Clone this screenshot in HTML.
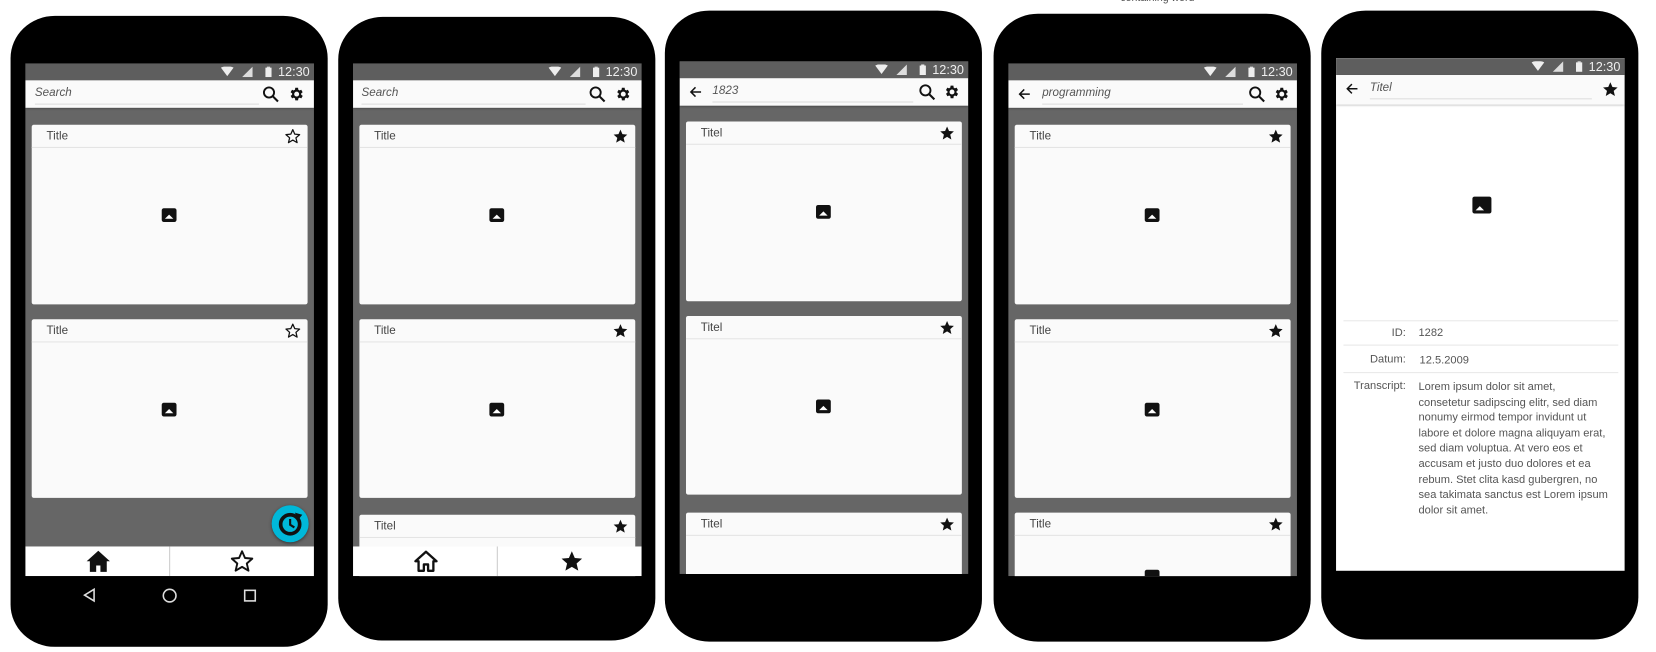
<!DOCTYPE html>
<html><head><meta charset="utf-8"><style>
*{box-sizing:border-box;margin:0;padding:0}
body{width:1656px;height:652px;background:#fff;overflow:hidden;font-family:"Liberation Sans",Arial,sans-serif}
#w{position:absolute;left:0;top:0;width:1560px;height:612px;overflow:hidden;transform:scale(1.057);transform-origin:0 0}
.ph{position:absolute;width:300px;background:#000;border-radius:42px/40px}
.sc{position:absolute;left:14px;width:273px;background:#666;overflow:hidden}
.st{position:absolute;left:0;top:0;width:100%;height:16px;background:#5e5e5e;color:#eee;font-size:12px}
.st .t{position:absolute;right:4px;top:1px}
.st svg{position:absolute;top:3px}
.ab{position:absolute;left:0;top:16px;width:100%;height:26px;background:#fafafa;box-shadow:0 1px 2px rgba(0,0,0,.3)}
.ab .in{position:absolute;top:6px;font-size:11px;font-style:italic;color:#555;border-bottom:1px solid #ddd;height:17px}
.ab svg{position:absolute;top:5px}
.cd{position:absolute;left:6px;width:261px;height:170px;background:#fafafa;border-radius:2px}
.cd .h{height:22px;border-bottom:1px solid #e4e4e4;font-size:11px;color:#444;padding:5px 0 0 14px;position:relative}
.cd .h svg{position:absolute;right:6px;top:3px}
.img{position:absolute;width:14px;height:13px;background:#111;border-radius:2px}
.img:after{content:"";position:absolute;left:3px;bottom:3px;border-left:4px solid transparent;border-right:4px solid transparent;border-bottom:4px solid #fff}
.bn{position:absolute;left:0;width:100%;height:28px;background:#fff}
.bn .d{position:absolute;left:136px;top:0;width:1px;height:28px;background:#ccc}
</style></head><body><div id="w">

<svg width="0" height="0" style="position:absolute"><defs>
<symbol id="wifi" viewBox="0 0 12 10"><path d="M0 1Q6-2 12 1L6 9Z" fill="#eee"/></symbol>
<symbol id="sig" viewBox="0 0 10 10"><path d="M10 0V10H0Z" fill="#ddd"/></symbol>
<symbol id="bat" viewBox="0 0 6 10"><rect x="0" y="1" width="6" height="9" fill="#eee"/><rect x="1.5" y="0" width="3" height="1" fill="#eee"/></symbol>
<symbol id="srch" viewBox="0 0 16 16"><circle cx="6.5" cy="6.5" r="4.8" fill="none" stroke="#111" stroke-width="1.8"/><path d="M10 10L15 15" stroke="#111" stroke-width="2"/></symbol>
<symbol id="gear" viewBox="0 0 24 24"><path fill="#111" d="M19.4 13a7.5 7.5 0 000-2l2.1-1.6-2-3.5-2.5 1a7 7 0 00-1.7-1L15 3h-4l-.4 2.9a7 7 0 00-1.7 1l-2.5-1-2 3.5L6.6 11a7.5 7.5 0 000 2l-2.1 1.6 2 3.5 2.5-1a7 7 0 001.7 1L11 21h4l.4-2.9a7 7 0 001.7-1l2.5 1 2-3.5zM13 15.5A3.5 3.5 0 1113 8.5a3.5 3.5 0 010 7z"/></symbol>
<symbol id="so" viewBox="0 0 24 24"><path d="M12 2.5l2.8 6.4 6.9.6-5.2 4.6 1.6 6.8L12 17.3l-6.1 3.6 1.6-6.8L2.3 9.5l6.9-.6z" fill="none" stroke="#111" stroke-width="1.8" stroke-linejoin="round"/></symbol>
<symbol id="sf" viewBox="0 0 24 24"><path d="M12 2.5l2.8 6.4 6.9.6-5.2 4.6 1.6 6.8L12 17.3l-6.1 3.6 1.6-6.8L2.3 9.5l6.9-.6z" fill="#111"/></symbol>
<symbol id="arr" viewBox="0 0 16 16"><path d="M14 8H3M8 3L3 8l5 5" fill="none" stroke="#111" stroke-width="1.6"/></symbol>
</defs></svg>

<!-- Phone 1 -->
<div class="ph" style="left:10px;top:15px;height:597px"></div>
<div class="sc" style="left:24px;top:60px;height:485px">
 <div class="st"><svg style="right:76px" width="12" height="10"><use href="#wifi"/></svg><svg style="right:58px" width="10" height="10"><use href="#sig"/></svg><svg style="right:40px" width="6" height="10"><use href="#bat"/></svg><span class="t">12:30</span></div>
 <div class="ab"><div class="in" style="left:9px;width:212px">Search</div><svg style="left:224px" width="16" height="16"><use href="#srch"/></svg><svg style="left:248px" width="16" height="16"><use href="#gear"/></svg></div>
 <div class="cd" style="top:58px"><div class="h">Title<svg width="16" height="16"><use href="#so"/></svg></div><div class="img" style="left:123px;top:79px"></div></div>
 <div class="cd" style="top:242px;height:169px"><div class="h">Title<svg width="16" height="16"><use href="#so"/></svg></div><div class="img" style="left:123px;top:79px"></div></div>
 <div style="position:absolute;left:233px;top:418px;width:35px;height:35px;border-radius:50%;background:#00b8d9;box-shadow:0 1px 3px rgba(0,0,0,.5)"><svg width="35" height="35" viewBox="0 0 35 35"><circle cx="17.5" cy="18" r="9" fill="none" stroke="#111" stroke-width="3.5"/><path d="M17.5 13v5.5l4 2.5" stroke="#111" stroke-width="2" fill="none"/><path d="M22 7l7 2-4 5z" fill="#111"/></svg></div>
 <div class="bn" style="top:457px"><div class="d"></div><svg style="position:absolute;left:57px;top:3px" width="24" height="22" viewBox="0 0 24 22"><path d="M12 1L1 11h3v10h6v-6h4v6h6V11h3z" fill="#111"/></svg><svg style="position:absolute;left:193px;top:2px" width="24" height="24"><use href="#so"/></svg></div>
</div>
<svg style="position:absolute;left:78px;top:556px" width="14" height="14" viewBox="0 0 14 14"><path d="M11 1.5V12.5L2 7Z" fill="none" stroke="#ddd" stroke-width="1.5"/></svg>
<svg style="position:absolute;left:153px;top:556px" width="15" height="15" viewBox="0 0 15 15"><circle cx="7.5" cy="7.5" r="6" fill="none" stroke="#ddd" stroke-width="1.5"/></svg>
<svg style="position:absolute;left:230px;top:557px" width="13" height="13" viewBox="0 0 13 13"><rect x="1.5" y="1.5" width="10" height="10" fill="none" stroke="#ddd" stroke-width="1.5"/></svg>

<!-- Phone 2 -->
<div class="ph" style="left:320px;top:16px;height:590px"></div>
<div class="sc" style="left:334px;top:60px;height:485px">
 <div class="st"><svg style="right:76px" width="12" height="10"><use href="#wifi"/></svg><svg style="right:58px" width="10" height="10"><use href="#sig"/></svg><svg style="right:40px" width="6" height="10"><use href="#bat"/></svg><span class="t">12:30</span></div>
 <div class="ab"><div class="in" style="left:8px;width:212px">Search</div><svg style="left:223px" width="16" height="16"><use href="#srch"/></svg><svg style="left:247px" width="16" height="16"><use href="#gear"/></svg></div>
 <div class="cd" style="top:58px"><div class="h">Title<svg width="16" height="16"><use href="#sf"/></svg></div><div class="img" style="left:123px;top:79px"></div></div>
 <div class="cd" style="top:242px;height:169px"><div class="h">Title<svg width="16" height="16"><use href="#sf"/></svg></div><div class="img" style="left:123px;top:79px"></div></div>
 <div class="cd" style="top:427px"><div class="h">Titel<svg width="16" height="16"><use href="#sf"/></svg></div></div>
 <div class="bn" style="top:457px"><div class="d"></div><svg style="position:absolute;left:57px;top:3px" width="24" height="22" viewBox="0 0 24 22"><path d="M12 2L2 11h3v9h5v-6h4v6h5v-9h3z" fill="none" stroke="#111" stroke-width="2.2" stroke-linejoin="round"/></svg><svg style="position:absolute;left:195px;top:2px" width="24" height="24"><use href="#sf"/></svg></div>
</div>

<!-- Phone 3 -->
<div class="ph" style="left:629px;top:10px;height:597px"></div>
<div class="sc" style="left:643px;top:58px;height:485px">
 <div class="st"><svg style="right:76px" width="12" height="10"><use href="#wifi"/></svg><svg style="right:58px" width="10" height="10"><use href="#sig"/></svg><svg style="right:40px" width="6" height="10"><use href="#bat"/></svg><span class="t">12:30</span></div>
 <div class="ab"><svg style="left:8px;top:6px" width="14" height="14"><use href="#arr"/></svg><div class="in" style="left:31px;width:190px">1823</div><svg style="left:226px" width="16" height="16"><use href="#srch"/></svg><svg style="left:249px" width="16" height="16"><use href="#gear"/></svg></div>
 <div class="cd" style="top:57px"><div class="h">Titel<svg width="16" height="16"><use href="#sf"/></svg></div><div class="img" style="left:123px;top:79px"></div></div>
 <div class="cd" style="top:241px;height:169px"><div class="h">Titel<svg width="16" height="16"><use href="#sf"/></svg></div><div class="img" style="left:123px;top:79px"></div></div>
 <div class="cd" style="top:427px;height:80px"><div class="h">Titel<svg width="16" height="16"><use href="#sf"/></svg></div></div>
</div>

<!-- Phone 4 -->
<div style="position:absolute;left:1030px;top:-7px;width:130px;text-align:center;font-size:10px;color:#555">containing word</div>
<div class="ph" style="left:940px;top:13px;height:594px"></div>
<div class="sc" style="left:954px;top:60px;height:485px">
 <div class="st"><svg style="right:76px" width="12" height="10"><use href="#wifi"/></svg><svg style="right:58px" width="10" height="10"><use href="#sig"/></svg><svg style="right:40px" width="6" height="10"><use href="#bat"/></svg><span class="t">12:30</span></div>
 <div class="ab"><svg style="left:8px;top:6px" width="14" height="14"><use href="#arr"/></svg><div class="in" style="left:32px;width:190px">programming</div><svg style="left:227px" width="16" height="16"><use href="#srch"/></svg><svg style="left:250px" width="16" height="16"><use href="#gear"/></svg></div>
 <div class="cd" style="top:58px"><div class="h">Title<svg width="16" height="16"><use href="#sf"/></svg></div><div class="img" style="left:123px;top:79px"></div></div>
 <div class="cd" style="top:242px;height:169px"><div class="h">Title<svg width="16" height="16"><use href="#sf"/></svg></div><div class="img" style="left:123px;top:79px"></div></div>
 <div class="cd" style="top:425px;height:80px"><div class="h">Title<svg width="16" height="16"><use href="#sf"/></svg></div><div class="img" style="left:123px;top:54px"></div></div>
</div>

<!-- Phone 5 -->
<div class="ph" style="left:1250px;top:10px;height:595px"></div>
<div class="sc" style="left:1264px;top:55px;height:485px;background:#fff">
 <div class="st"><svg style="right:76px" width="12" height="10"><use href="#wifi"/></svg><svg style="right:58px" width="10" height="10"><use href="#sig"/></svg><svg style="right:40px" width="6" height="10"><use href="#bat"/></svg><span class="t">12:30</span></div>
 <div class="ab" style="height:28px"><svg style="left:8px;top:6px" width="14" height="14"><use href="#arr"/></svg><div class="in" style="left:32px;width:210px">Titel</div><svg style="left:251px;top:5px" width="17" height="17"><use href="#sf"/></svg></div>
 <div class="img" style="left:129px;top:131px;width:18px;height:16px"></div>
 <div style="position:absolute;left:7px;top:248px;width:260px;height:1px;background:#e8e8e8"></div>
 <div style="position:absolute;left:7px;top:271px;width:260px;height:1px;background:#e8e8e8"></div>
 <div style="position:absolute;left:7px;top:297px;width:260px;height:1px;background:#e8e8e8"></div>
 <div style="position:absolute;right:207px;top:254px;font-size:10.5px;color:#555">ID:</div>
 <div style="position:absolute;left:78px;top:254px;font-size:10.5px;color:#555">1282</div>
 <div style="position:absolute;right:207px;top:279px;font-size:10.5px;color:#555">Datum:</div>
 <div style="position:absolute;left:79px;top:280px;font-size:10.5px;color:#555">12.5.2009</div>
 <div style="position:absolute;right:207px;top:304px;font-size:10.5px;color:#555">Transcript:</div>
 <div style="position:absolute;left:78px;top:304px;width:188px;font-size:10.5px;line-height:14.6px;color:#555">Lorem ipsum dolor sit amet,<br>consetetur sadipscing elitr, sed diam nonumy eirmod tempor invidunt ut labore et dolore magna aliquyam erat, sed diam voluptua. At vero eos et accusam et justo duo dolores et ea rebum. Stet clita kasd gubergren, no sea takimata sanctus est Lorem ipsum dolor sit amet.</div>
</div>

</div></body></html>
